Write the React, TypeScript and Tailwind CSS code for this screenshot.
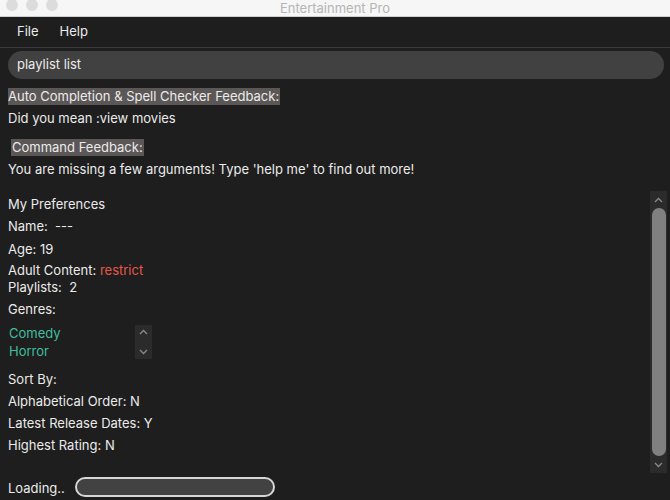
import React from "react";

const Up = () => (
  <svg width="9" height="6" viewBox="0 0 9 6" fill="none">
    <polyline points="1,5 4.5,1.5 8,5" stroke="#8a8a8a" strokeWidth="1.3" />
  </svg>
);
const Down = () => (
  <svg width="9" height="6" viewBox="0 0 9 6" fill="none">
    <polyline points="1,1 4.5,4.5 8,1" stroke="#8a8a8a" strokeWidth="1.3" />
  </svg>
);

const Line = ({ h, children, className = "" }: { h: string; children: React.ReactNode; className?: string }) => (
  <div className={`flex items-center whitespace-pre ${h} ${className}`}>{children}</div>
);

export default function App() {
  return (
    <div
      className="w-[670px] h-[500px] overflow-hidden bg-[#1e1e1e] text-[13px] text-[#ebebeb] flex flex-col"
      style={{ fontFamily: "Inter, 'Noto Sans', sans-serif" }}
    >
      {/* title bar */}
      <div className="relative h-[17px] bg-[#f6f6f6] border-b border-[#cfcfcf] flex items-center justify-center shrink-0">
        <div className="absolute left-[6px] top-[-1px] flex gap-[8px]">
          <div className="w-[12px] h-[12px] rounded-full bg-[#dcdcdc]" />
          <div className="w-[12px] h-[12px] rounded-full bg-[#dcdcdc]" />
          <div className="w-[12px] h-[12px] rounded-full bg-[#dcdcdc]" />
        </div>
        <span className="text-[#b5b5b5] text-[13px] leading-[15px]">Entertainment Pro</span>
      </div>

      {/* menu */}
      <div className="h-[31px] flex items-center pl-[17px] gap-[21px] border-b border-[#3a3a3a] shrink-0">
        <span>File</span>
        <span>Help</span>
      </div>

      <div className="px-[8px] pt-[3px] flex flex-col">
        <div className="h-[28px] rounded-full bg-[#414141] flex items-center pl-[9px] w-[656px]">playlist list</div>

        <div className="mt-[9px] flex">
          <div className="h-[17px] bg-[#5b5757] flex items-center pr-[1px]">Auto Completion &amp; Spell Checker Feedback:</div>
        </div>
        <Line h="h-[18px] mt-[5px]">Did you mean :view movies</Line>
        <div className="mt-[11px] flex pl-[3px]">
          <div className="h-[17px] bg-[#5b5757] flex items-center pl-[1px] pr-[1px]">Command Feedback:</div>
        </div>
        <Line h="h-[18px] mt-[5px]">You are missing a few arguments! Type 'help me' to find out more!</Line>
      </div>

      {/* scroll pane */}
      <div className="mt-[12px] h-[282px] flex shrink-0">
        <div className="flex-1 pl-[8px] pt-[3px] flex flex-col">
          <Line h="h-[22px]">My Preferences</Line>
          <Line h="h-[22px]">Name:  ---</Line>
          <Line h="h-[23px]">Age: 19</Line>
          <Line h="h-[20px]">
            Adult Content: <span className="text-[#e5574b]">restrict</span>
          </Line>
          <Line h="h-[14px]">Playlists:  2</Line>
          <Line h="h-[30px]">Genres:</Line>
          <div className="flex">
            <div className="w-[127px] flex flex-col text-[#3fbf9e] pl-[1px]">
              <Line h="h-[18px]">Comedy</Line>
              <Line h="h-[18px]">Horror</Line>
            </div>
            <div className="w-[17px] h-[34px] bg-[#2b2b2b] flex flex-col items-center justify-between py-[4px]">
              <Up />
              <Down />
            </div>
          </div>
          <Line h="h-[22px] mt-[8px]">Sort By:</Line>
          <Line h="h-[22px]">Alphabetical Order: N</Line>
          <Line h="h-[22px]">Latest Release Dates: Y</Line>
          <Line h="h-[22px]">Highest Rating: N</Line>
        </div>
        <div className="w-[17px] mr-[3px] bg-[#2b2b2b] flex flex-col items-center">
          <div className="h-[17px] flex items-center justify-center">
            <Up />
          </div>
          <div className="w-[14px] flex-1 rounded-full bg-[#808080]" />
          <div className="h-[17px] flex items-center justify-center">
            <Down />
          </div>
        </div>
      </div>

      {/* loading */}
      <div className="h-[25px] flex items-center pl-[8px] pt-[2px] shrink-0">
        <span className="w-[67px] pt-[5px]">Loading..</span>
        <div className="w-[200px] h-[20px] rounded-full border-2 border-[#d6d6d6] bg-[#424242]" />
      </div>
    </div>
  );
}
